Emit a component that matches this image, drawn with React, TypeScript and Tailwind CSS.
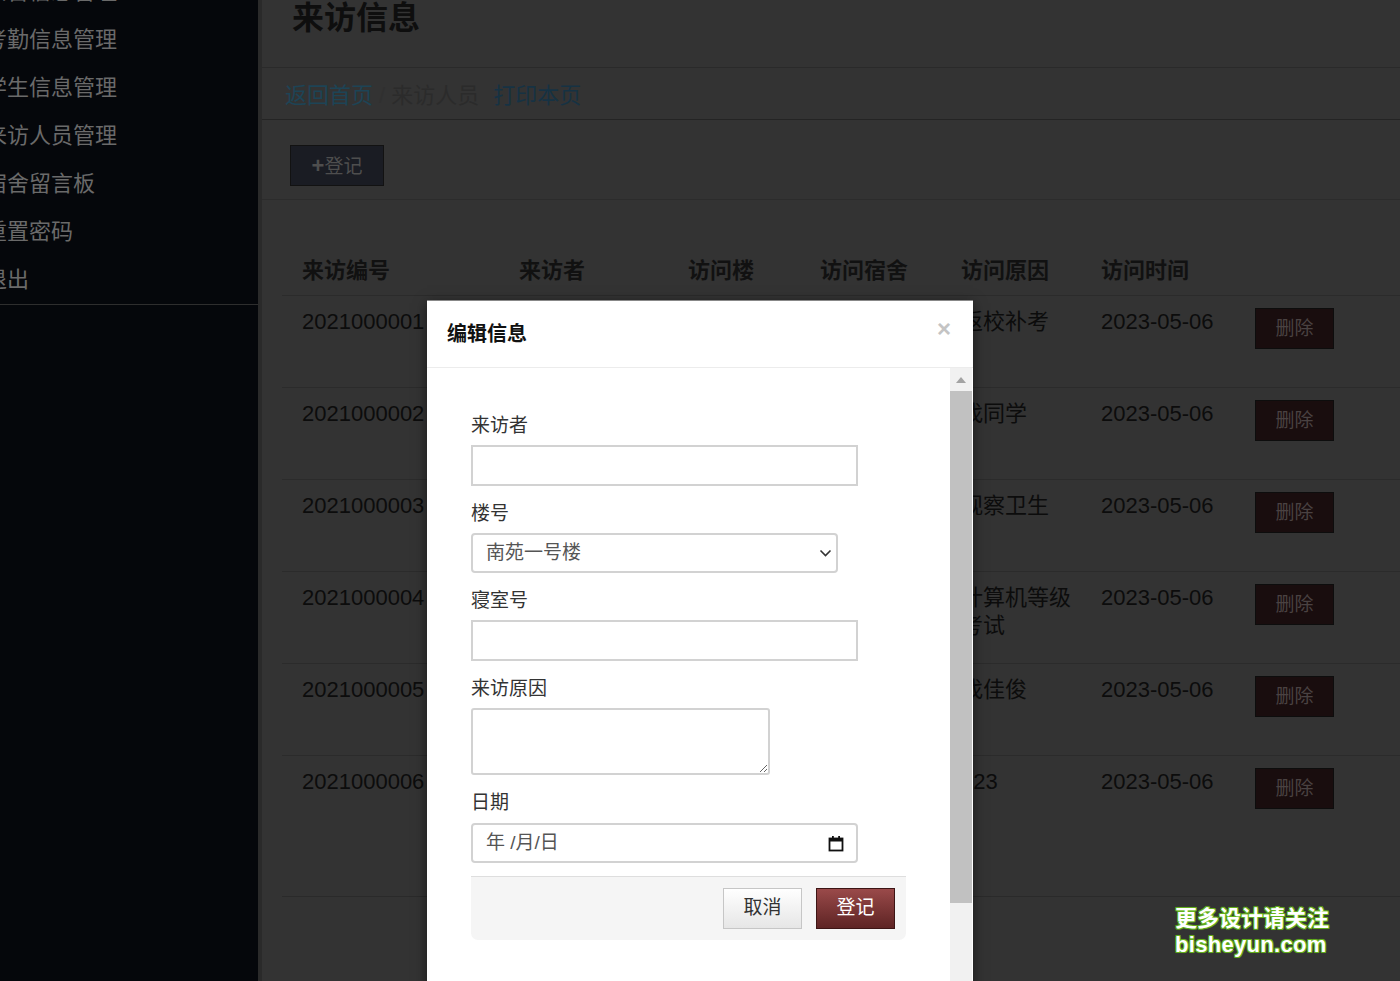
import React from "react";

const sideItems = ["公告信息管理", "考勤信息管理", "学生信息管理", "来访人员管理", "宿舍留言板", "重置密码", "退出"];

const rows = [
  { id: "2021000001", name: "张三", building: "南苑一号楼", room: "101", reason: "返校补考", time: "2023-05-06" },
  { id: "2021000002", name: "李四", building: "南苑一号楼", room: "102", reason: "找同学", time: "2023-05-06" },
  { id: "2021000003", name: "王五", building: "南苑二号楼", room: "201", reason: "观察卫生", time: "2023-05-06" },
  { id: "2021000004", name: "赵六", building: "南苑二号楼", room: "202", reason: "计算机等级考试", time: "2023-05-06" },
  { id: "2021000005", name: "钱七", building: "北苑一号楼", room: "301", reason: "找佳俊", time: "2023-05-06" },
  { id: "2021000006", name: "孙八", building: "北苑一号楼", room: "302", reason: "123", time: "2023-05-06" },
];

const cols = "grid grid-cols-[217px_169px_132px_141px_140px_154px_1fr]";

function Label({ children }: { children: React.ReactNode }) {
  return <div className="h-[26px] text-[19px] leading-[29px] text-[#333]">{children}</div>;
}

export default function App() {
  return (
    <div className="relative h-[981px] w-[1400px] overflow-hidden bg-[#333333] font-['Liberation_Sans','Noto_Sans_CJK_SC',sans-serif]">
      <div className="flex h-full">
        {/* 侧边栏 */}
        <aside className="h-full w-[262px] shrink-0 border-r-4 border-[#2a2a2a] bg-[#05070b]">
          <ul className="-mt-[32px] border-b border-[#2e2e2e]">
            {sideItems.map((t) => (
              <li key={t} className="-ml-[15px] h-[48px] whitespace-nowrap text-[22px] leading-[48px] text-[#6a6a6a]">
                {t}
              </li>
            ))}
          </ul>
        </aside>

        {/* 主内容 */}
        <main className="flex-1">
          <div className="flex h-[68px] items-start border-b border-[#2a2a2a] pl-[30px]">
            <h1 className="-mt-[2px] text-[32px] font-bold leading-[40px] text-[#0e0e0e]">来访信息</h1>
          </div>
          <div className="flex h-[52px] items-center border-b border-[#242424] pl-[23px] pt-[4px] text-[22px]">
            <span className="text-[#1d4456]">返回首页</span>
            <span className="mx-[6px] text-[#303030]">/</span>
            <span className="text-[#2b2b2b]">来访人员</span>
            <span className="ml-[14px] text-[#163243]">打印本页</span>
          </div>
          <div className="h-[80px] border-b border-[#2c2c2c] pl-[28px] pt-[25px]">
            <button className="h-[41px] w-[94px] border border-[#121212] bg-[#1a1c23] text-[19px] text-[#4e4e4e]">
              <span className="text-[22px] font-bold">+</span>登记
            </button>
          </div>

          <div className="ml-[20px] mt-[46px] h-[651px] border-b border-[#2a2a2a]">
            <div className={`${cols} h-[50px] items-center border-b border-[#2b2b2b] text-[22px] font-bold text-[#111]`}>
              <div className="px-[20px]">来访编号</div>
              <div className="px-[20px]">来访者</div>
              <div className="px-[20px]">访问楼</div>
              <div className="px-[20px]">访问宿舍</div>
              <div className="px-[20px]">访问原因</div>
              <div className="px-[20px]">访问时间</div>
              <div />
            </div>
            {rows.map((r, i) => (
              <div
                key={r.id}
                className={`${cols} h-[92px] pt-[12px] text-[22px] leading-[28px] text-[#0c0c0c] ${i < rows.length - 1 ? "border-b border-[#2b2b2b]" : ""}`}
              >
                <div className="px-[20px]">{r.id}</div>
                <div className="px-[20px]">{r.name}</div>
                <div className="px-[20px]">{r.building}</div>
                <div className="px-[20px]">{r.room}</div>
                <div className="pl-[20px] pr-[6px]">{r.reason}</div>
                <div className="px-[20px]">{r.time}</div>
                <div className="px-[20px]">
                  <button className="h-[41px] w-[79px] border border-[#0d0d0d] bg-[#190d0e] text-[19px] leading-[39px] text-[#4a4242]">
                    删除
                  </button>
                </div>
              </div>
            ))}
          </div>
        </main>
      </div>

      {/* 编辑弹窗 */}
      <div className="absolute left-[427px] top-[300px] flex h-[690px] w-[546px] flex-col border-t border-[#888] bg-white shadow-[0_3px_12px_rgba(0,0,0,0.5)]">
        <div className="flex h-[67px] shrink-0 items-center justify-between border-b border-[#ececec] pl-[20px] pr-[22px]">
          <h3 className="text-[20px] font-bold text-[#111]">编辑信息</h3>
          <span className="-mt-[10px] text-[24px] font-bold leading-none text-[#c4c4c4]">×</span>
        </div>
        <div className="flex flex-1">
          <div className="flex-1 pl-[44px] pt-[43px]">
            <Label>来访者</Label>
            <input className="mt-[8px] block h-[41px] w-[387px] border-2 border-[#d2d2d2] px-[12px] text-[18px] outline-none" />

            <div className="mt-[13px]">
              <Label>楼号</Label>
            </div>
            <div className="relative mt-[8px] w-[367px]">
              <select className="block h-[40px] w-full appearance-none rounded-[4px] border-2 border-[#d2d2d2] bg-white pl-[13px] text-[19px] text-[#555] outline-none">
                <option>南苑一号楼</option>
                <option>南苑二号楼</option>
                <option>北苑一号楼</option>
              </select>
              <svg className="pointer-events-none absolute right-[6px] top-[15px]" width="13" height="10" viewBox="0 0 13 10">
                <path d="M1.5 2.5 L6.5 7.5 L11.5 2.5" fill="none" stroke="#333" strokeWidth="1.6" />
              </svg>
            </div>

            <div className="mt-[13px]">
              <Label>寝室号</Label>
            </div>
            <input className="mt-[8px] block h-[41px] w-[387px] border-2 border-[#d2d2d2] px-[12px] text-[18px] outline-none" />

            <div className="mt-[13px]">
              <Label>来访原因</Label>
            </div>
            <textarea className="mt-[8px] block h-[67px] w-[299px] rounded-[3px] border-2 border-[#d2d2d2] px-[10px] text-[18px] outline-none" />

            <div className="mt-[13px]">
              <Label>日期</Label>
            </div>
            <div className="mt-[9px] flex h-[40px] w-[387px] items-center justify-between rounded-[4px] border-2 border-[#d2d2d2] pl-[13px] pr-[12px] text-[19px] text-[#555]">
              <span>年 /月/日</span>
              <svg width="16" height="17" viewBox="0 0 16 17">
                <rect x="1.5" y="3.5" width="13" height="12" fill="none" stroke="#111" strokeWidth="1.8" />
                <rect x="1.5" y="3" width="13" height="3.5" fill="#111" />
                <rect x="4" y="1" width="1.8" height="3" fill="#111" />
                <rect x="10.2" y="1" width="1.8" height="3" fill="#111" />
              </svg>
            </div>

            <div className="mt-[13px] flex h-[64px] w-[435px] justify-end gap-[14px] rounded-b-[7px] border-t border-[#dedede] bg-[#f5f5f5] pr-[11px] pt-[11px]">
              <button className="h-[41px] w-[79px] border border-[#c6c6c6] bg-gradient-to-b from-white to-[#e6e6e6] text-[19px] text-[#333]">
                取消
              </button>
              <button className="h-[41px] w-[79px] border border-[#3d1515] bg-gradient-to-b from-[#9a4a4a] to-[#5e2424] text-[19px] text-white">
                登记
              </button>
            </div>
          </div>

          {/* 滚动条 */}
          <div className="mr-[1px] flex w-[22px] flex-col bg-[#f1f1f1]">
            <div className="flex h-[23px] items-center justify-center">
              <svg width="10" height="6" viewBox="0 0 10 6">
                <path d="M0 6 L5 0 L10 6 Z" fill="#a3a3a3" />
              </svg>
            </div>
            <div className="h-[512px] bg-[#c1c1c1]" />
          </div>
        </div>
      </div>

      {/* 水印 */}
      <div className="absolute left-[1175px] top-[906px] text-[22px] font-bold leading-[26px] text-white [text-shadow:0_0_2px_#6cc21f,1px_1px_0_#5fa81b,-1px_-1px_0_#5fa81b,1px_-1px_0_#5fa81b,-1px_1px_0_#5fa81b]">
        <div>更多设计请关注</div>
        <div className="tracking-[0.3px]">bisheyun.com</div>
      </div>
    </div>
  );
}
